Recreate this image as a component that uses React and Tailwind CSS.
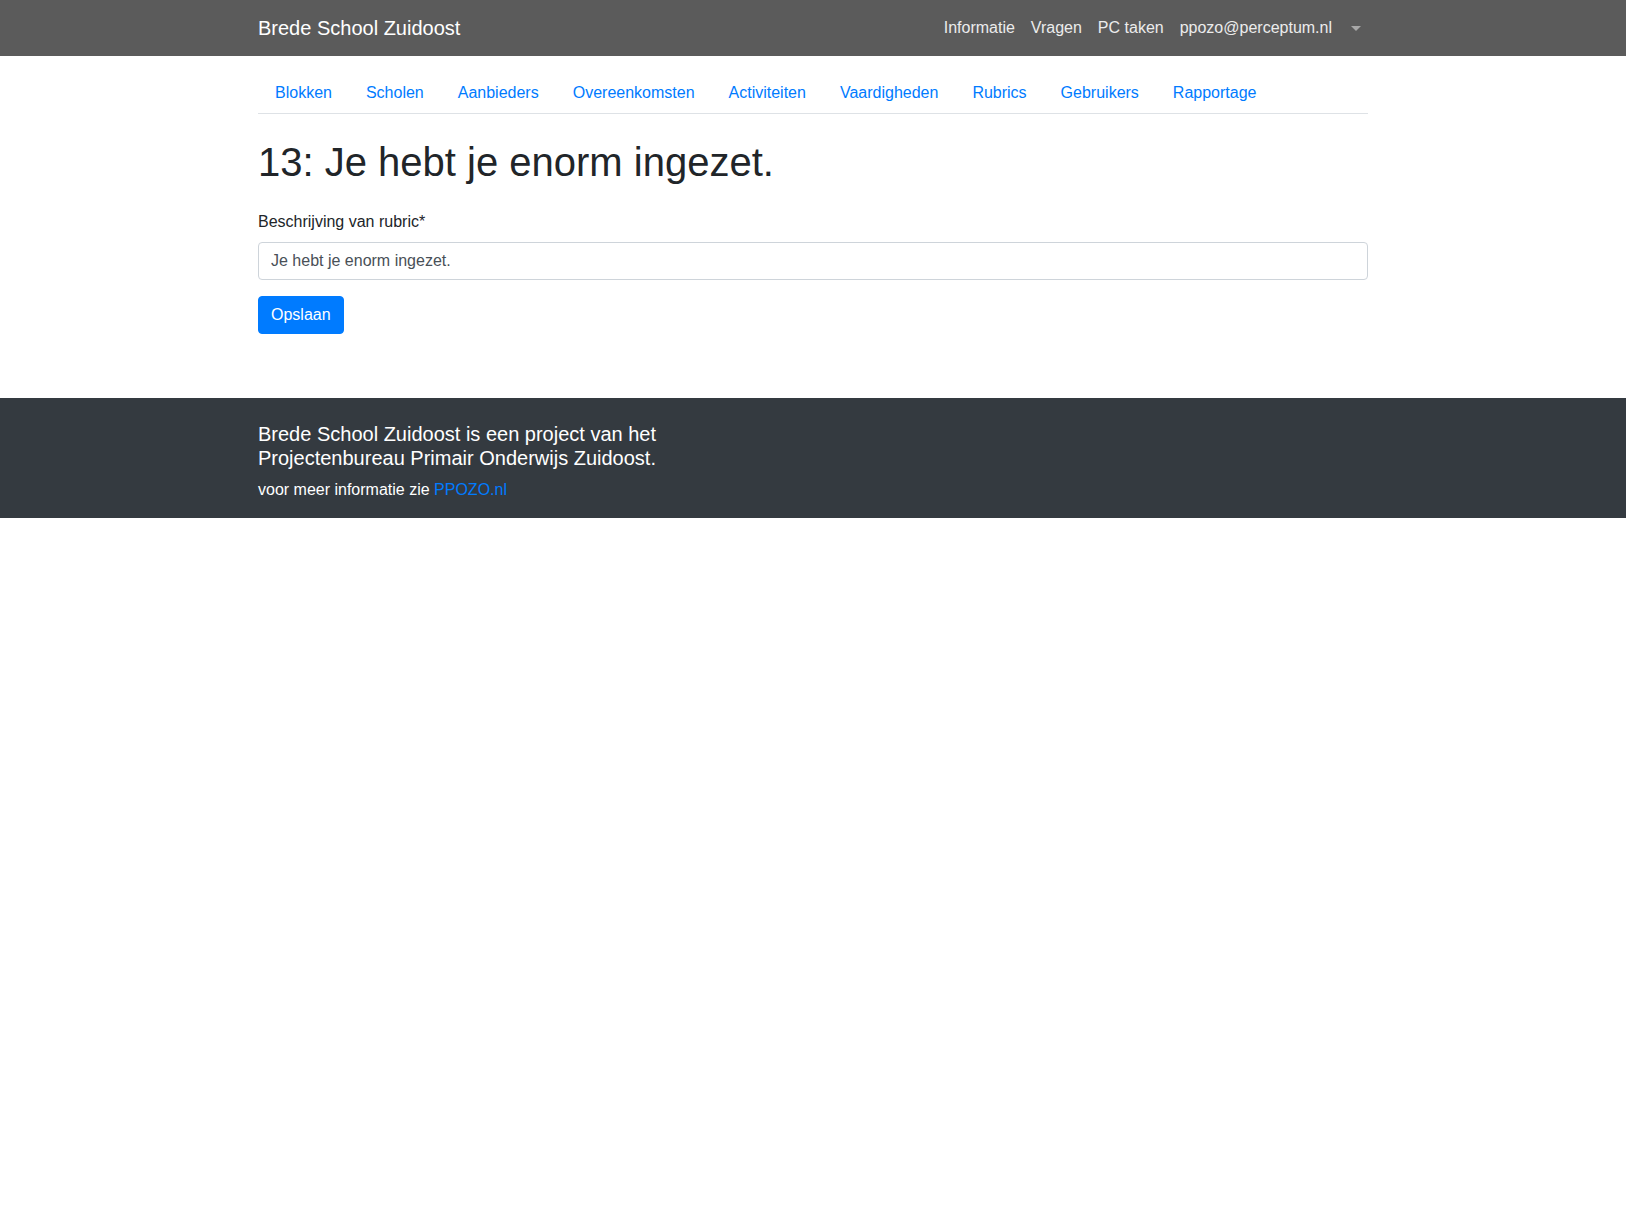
import React from 'react';

const tabs = [
  'Blokken',
  'Scholen',
  'Aanbieders',
  'Overeenkomsten',
  'Activiteiten',
  'Vaardigheden',
  'Rubrics',
  'Gebruikers',
  'Rapportage',
];

function TopBar() {
  return (
    <nav className="bg-[#5b5b5b] h-[56px]">
      <div className="w-[1110px] mx-auto h-full flex items-center justify-between">
        <a href="#" className="text-[20px] leading-[30px] text-white">Brede School Zuidoost</a>
        <ul className="flex items-center">
          <li><a href="#" className="block px-2 py-2 leading-6 text-[#ececec]">Informatie</a></li>
          <li><a href="#" className="block px-2 py-2 leading-6 text-[#ececec]">Vragen</a></li>
          <li><a href="#" className="block px-2 py-2 leading-6 text-[#ececec]">PC taken</a></li>
          <li><a href="#" className="block px-2 py-2 leading-6 text-[#ececec]">ppozo@perceptum.nl</a></li>
          <li>
            <a href="#" className="flex items-center h-10 pl-[11px] pr-[7px]">
              {/* caret */}
              <span className="block w-0 h-0 border-t-[5px] border-t-[#a8a8a8] border-x-[5px] border-x-transparent" />
            </a>
          </li>
        </ul>
      </div>
    </nav>
  );
}

function Footer() {
  return (
    <footer className="bg-[#343a40] text-white">
      <div className="w-[1110px] mx-auto pt-6 pb-4">
        <h5 className="text-[20px] leading-[24px] mb-2">
          Brede School Zuidoost is een project van het
          <br />
          Projectenbureau Primair Onderwijs Zuidoost.
        </h5>
        <p className="leading-6">
          voor meer informatie zie <a href="#" className="text-[#007bff]">PPOZO.nl</a>
        </p>
      </div>
    </footer>
  );
}

export default function App() {
  return (
    <div className="min-h-screen bg-white text-[#212529] text-base" style={{ fontFamily: '"Liberation Sans", Arial, sans-serif' }}>
      <TopBar />

      <main className="w-[1110px] mx-auto pb-16">
        <ul className="flex mt-[17px] border-b border-[#dee2e6]">
          {tabs.map((t) => (
            <li key={t}>
              <a href="#" className="block px-[17px] py-2 leading-6 text-[#007bff]">{t}</a>
            </li>
          ))}
        </ul>

        <h1 className="text-[40px] leading-[48px] font-medium mt-[24px] mb-[24px]">13: Je hebt je enorm ingezet.</h1>

        <form onSubmit={(e) => e.preventDefault()}>
          <div className="mb-4">
            <label className="block leading-6 mb-2">Beschrijving van rubric*</label>
            <input
              type="text"
              defaultValue="Je hebt je enorm ingezet."
              className="block w-full h-[38px] px-3 border border-[#ced4da] rounded text-[#495057] leading-6 outline-none"
            />
          </div>
          <button type="submit" className="h-[38px] px-3 bg-[#007bff] text-white rounded leading-6 border border-[#007bff]">
            Opslaan
          </button>
        </form>
      </main>

      <Footer />
    </div>
  );
}
